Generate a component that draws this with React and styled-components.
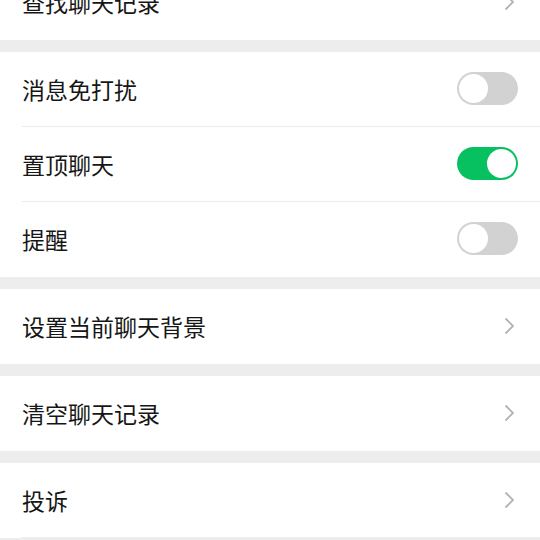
import React from "react";
import styled, { createGlobalStyle } from "styled-components";

const GlobalStyle = createGlobalStyle`
  html, body {
    margin: 0;
    padding: 0;
    background: #ededed;
  }
  body {
    font-family: "Noto Sans CJK SC", "Noto Sans", sans-serif;
  }
`;

const Page = styled.div`
  width: 540px;
  height: 540px;
  overflow: hidden;
  background: #ededed;
`;

const Scroller = styled.div`
  margin-top: -35px;
  display: flex;
  flex-direction: column;
  gap: 12px;
`;

const Group = styled.div`
  background: #fff;
  display: flex;
  flex-direction: column;
`;

const Row = styled.div`
  height: 75px;
  display: flex;
  align-items: center;
  justify-content: space-between;
  padding: 0 22px 2px 22px;
  position: relative;
  box-sizing: border-box;

  &::after {
    content: "";
    display: ${(p) => (p.$divider ? "block" : "none")};
    position: absolute;
    left: 22px;
    right: 0;
    bottom: 0;
    height: 1px;
    background: #ececec;
  }
`;

const Label = styled.span`
  font-size: 23px;
  color: #161616;
  letter-spacing: 0;
`;

const Switch = styled.div`
  width: 61px;
  height: 33px;
  border-radius: 17px;
  box-sizing: border-box;
  background: ${(p) => (p.$on ? "#07c160" : "#d2d2d2")};
  padding: 2px;
  display: flex;
  justify-content: ${(p) => (p.$on ? "flex-end" : "flex-start")};
`;

const Knob = styled.div`
  width: 29px;
  height: 29px;
  border-radius: 50%;
  background: #fff;
`;

const Chevron = () => (
  <svg width="14" height="18" viewBox="0 0 14 18" style={{ marginRight: 2 }}>
    <path d="M3.5 1.5 L11 9 L3.5 16.5" fill="none" stroke="#b2b2b2" strokeWidth="1.8" />
  </svg>
);

const LinkRow = ({ label, divider }) => (
  <Row $divider={divider}>
    <Label>{label}</Label>
    <Chevron />
  </Row>
);

const SwitchRow = ({ label, on, divider }) => (
  <Row $divider={divider}>
    <Label>{label}</Label>
    <Switch $on={on}>
      <Knob />
    </Switch>
  </Row>
);

export default function App() {
  return (
    <Page>
      <GlobalStyle />
      <Scroller>
        <Group>
          <LinkRow label="查找聊天记录" />
        </Group>
        <Group>
          <SwitchRow label="消息免打扰" divider />
          <SwitchRow label="置顶聊天" on divider />
          <SwitchRow label="提醒" />
        </Group>
        <Group>
          <LinkRow label="设置当前聊天背景" />
        </Group>
        <Group>
          <LinkRow label="清空聊天记录" />
        </Group>
        <Group>
          <LinkRow label="投诉" divider />
        </Group>
      </Scroller>
    </Page>
  );
}
